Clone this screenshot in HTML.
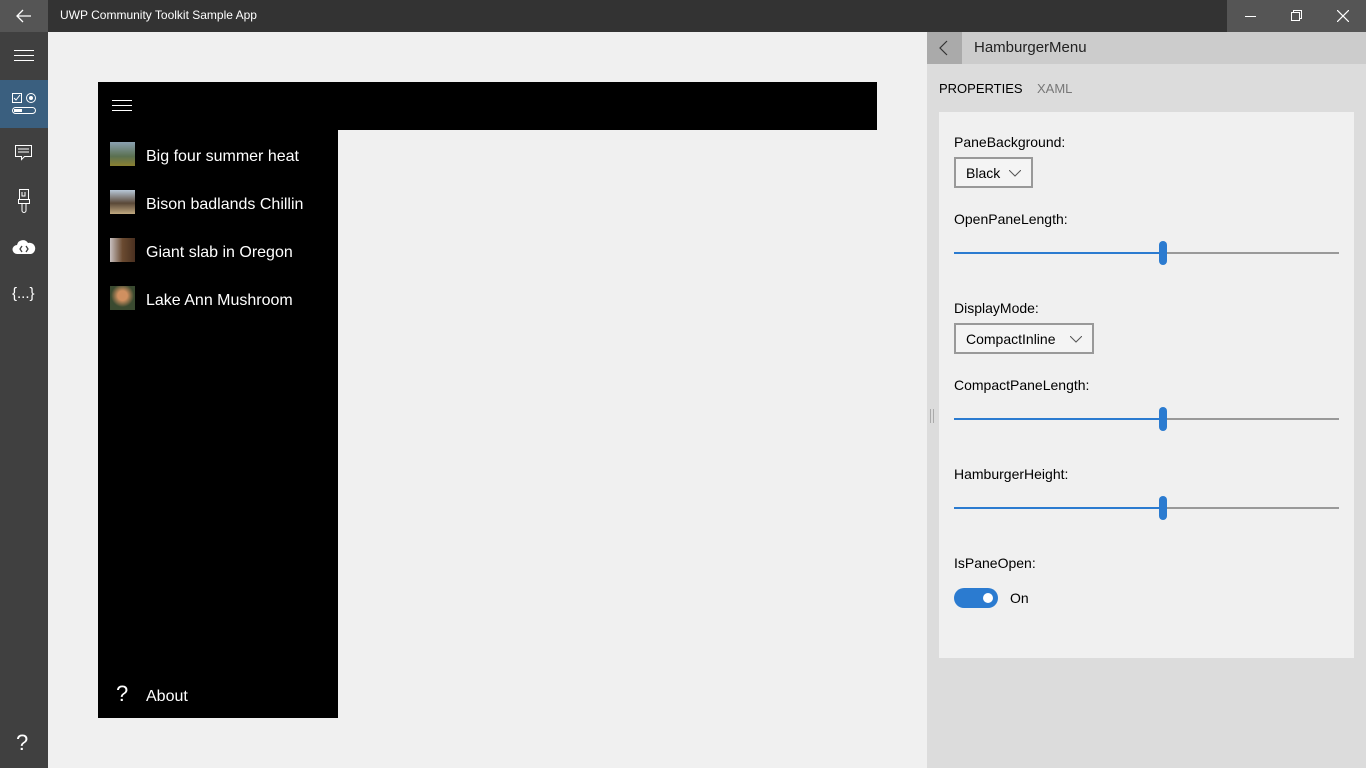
<!DOCTYPE html>
<html><head><style>
*{margin:0;padding:0;box-sizing:border-box}
body{width:1366px;height:768px;overflow:hidden;position:relative;background:#f0f0f0;font-family:"Segoe UI","Liberation Sans","DejaVu Sans",sans-serif}
.a{position:absolute}
.t{color:#fff;font-size:16px}
.lbl{position:absolute;left:954px;font-size:14px;color:#000}
.dd{position:absolute;left:954px;height:31px;border:2px solid #999;background:#f4f4f4;font-size:14px;padding:6px 0 0 10px}
.track{position:absolute;left:954px;width:385px;height:2px;background:#999}
.fill{position:absolute;left:954px;width:209px;height:2px;background:#2b7bd0}
.thumb{position:absolute;left:1159px;width:8px;height:24px;border-radius:4px;background:#2b7bd0}
.nav svg{position:absolute;left:12px}
</style></head><body>
<div class="a" style="left:0;top:0;width:1366px;height:32px;background:#333"></div>
<div class="a" style="left:0;top:0;width:48px;height:32px;background:#555"></div>
<svg class="a" style="left:16px;top:9px" width="16" height="14"><path d="M15 7H1M7 1L1 7L7 13" stroke="#fff" stroke-width="1.3" fill="none"/></svg>
<div class="a" style="left:60px;top:8px;font-size:12px;color:#fff">UWP Community Toolkit Sample App</div>
<div class="a" style="left:1227px;top:0;width:139px;height:32px;background:#555"></div>
<div class="a" style="left:1245px;top:16px;width:11px;height:1px;background:#fff"></div>
<svg class="a" style="left:1291px;top:10px" width="12" height="12"><path d="M0.5 2.5h8v8h-8zM2.5 2.5v-2h8v8h-2" stroke="#fff" fill="none"/></svg>
<svg class="a" style="left:1337px;top:10px" width="12" height="12"><path d="M0 0L12 12M12 0L0 12" stroke="#fff" stroke-width="1.2"/></svg>
<div class="a nav" style="left:0;top:32px;width:48px;height:736px;background:#404040">
<div class="a" style="left:0;top:48px;width:48px;height:48px;background:#3a5f7f"></div>
<svg style="top:17px" width="24" height="14"><path d="M2 1.5h20M2 6.5h20M2 11.5h20" stroke="#fff"/></svg>
<svg style="top:60px" width="26" height="24"><rect x="0.5" y="1.5" width="9" height="9" stroke="#fff" fill="none"/><path d="M2 6l2 2 4-5" stroke="#fff" fill="none"/><circle cx="19" cy="6" r="4.5" stroke="#fff" fill="none"/><circle cx="19" cy="6" r="2" fill="#fff"/><rect x="0.5" y="15.5" width="23" height="6" rx="3" stroke="#fff" fill="none"/><rect x="2" y="17" width="8" height="3" fill="#fff"/></svg>
<svg style="top:112px" width="24" height="20"><path d="M3.5 1.5h16v11h-7l-3 3v-3h-6z" stroke="#fff" fill="none"/><path d="M6 5h11M6 8h11" stroke="#fff"/></svg>
<svg style="top:156px" width="24" height="26"><path d="M7.5 1.5h9v10h-9zM6.5 11.5h11v4h-11zM10 15.5v7a2 2 0 0 0 4 0v-7" stroke="#fff" fill="none"/><path d="M10 4v4h3V4" stroke="#fff" fill="none"/></svg>
<svg style="top:206px" width="24" height="18"><path d="M5 16a4.5 4.5 0 0 1 0-9a6 6 0 0 1 11-2a5 5 0 0 1 3 11z" fill="#fff"/><path d="M10 8l-2 3 2 3M14 8l2 3-2 3" stroke="#404040" stroke-width="1.3" fill="none"/></svg>
<div class="a" style="left:12px;top:253px;color:#fff;font-size:15px">{...}</div>
<div class="a" style="left:16px;top:698px;color:#fff;font-size:22px;font-weight:300">?</div>
</div>
<div class="a" style="left:98px;top:82px;width:779px;height:48px;background:#000"></div>
<div class="a" style="left:98px;top:130px;width:240px;height:588px;background:#000"></div>
<svg class="a" style="left:112px;top:100px" width="20" height="12"><path d="M0 .5h20M0 5.5h20M0 10.5h20" stroke="#fff"/></svg>
<div class="a" style="left:110px;top:142px;width:25px;height:24px;background:linear-gradient(#8aa0b0,#5a7050 60%,#8a8030)"></div>
<div class="a" style="left:110px;top:190px;width:25px;height:24px;background:linear-gradient(#b8c8d8,#5a4838 55%,#c0a880)"></div>
<div class="a" style="left:110px;top:238px;width:25px;height:24px;background:linear-gradient(90deg,#c8c0c0,#6a4a30 50%,#4a3020)"></div>
<div class="a" style="left:110px;top:286px;width:25px;height:24px;background:radial-gradient(circle at 50% 40%,#d09060 25%,#3a4a30 60%)"></div>
<div class="a t" style="left:146px;top:148px">Big four summer heat</div>
<div class="a t" style="left:146px;top:196px">Bison badlands Chillin</div>
<div class="a t" style="left:146px;top:244px">Giant slab in Oregon</div>
<div class="a t" style="left:146px;top:292px">Lake Ann Mushroom</div>
<div class="a" style="left:116px;top:681px;color:#fff;font-size:22px;font-weight:300">?</div>
<div class="a t" style="left:146px;top:688px">About</div>
<div class="a" style="left:927px;top:32px;width:439px;height:736px;background:#dcdcdc"></div>
<div class="a" style="left:927px;top:32px;width:439px;height:32px;background:#ccc"></div>
<div class="a" style="left:927px;top:32px;width:35px;height:32px;background:#aaa"></div>
<svg class="a" style="left:939px;top:40px" width="10" height="16"><path d="M8 1L1 8l7 7" stroke="#333" stroke-width="1.2" fill="none"/></svg>
<div class="a" style="left:974px;top:39px;font-size:15px;color:#222">HamburgerMenu</div>
<div class="a" style="left:939px;top:81px;font-size:13px;color:#000">PROPERTIES</div>
<div class="a" style="left:1037px;top:81px;font-size:13px;color:#777">XAML</div>
<div class="a" style="left:939px;top:112px;width:415px;height:546px;background:#f0f0f0"></div>
<div class="a" style="left:930px;top:409px;width:4px;height:14px;border-left:1px solid #aaa;border-right:1px solid #aaa"></div>
<div class="lbl" style="top:134px">PaneBackground:</div>
<div class="dd" style="top:157px;width:79px">Black<svg class="a" style="right:10px;top:11px" width="12" height="7"><path d="M0 0l6 6 6-6" stroke="#555" fill="none"/></svg></div>
<div class="lbl" style="top:211px">OpenPaneLength:</div>
<div class="track" style="top:252px"></div><div class="fill" style="top:252px"></div><div class="thumb" style="top:241px"></div>
<div class="lbl" style="top:300px">DisplayMode:</div>
<div class="dd" style="top:323px;width:140px">CompactInline<svg class="a" style="right:10px;top:11px" width="12" height="7"><path d="M0 0l6 6 6-6" stroke="#555" fill="none"/></svg></div>
<div class="lbl" style="top:377px">CompactPaneLength:</div>
<div class="track" style="top:418px"></div><div class="fill" style="top:418px"></div><div class="thumb" style="top:407px"></div>
<div class="lbl" style="top:466px">HamburgerHeight:</div>
<div class="track" style="top:507px"></div><div class="fill" style="top:507px"></div><div class="thumb" style="top:496px"></div>
<div class="lbl" style="top:555px">IsPaneOpen:</div>
<div class="a" style="left:954px;top:588px;width:44px;height:20px;border-radius:10px;background:#2b7bd0"></div>
<div class="a" style="left:983px;top:593px;width:10px;height:10px;border-radius:5px;background:#fff"></div>
<div class="a" style="left:1010px;top:590px;font-size:14px">On</div>
</body></html>
